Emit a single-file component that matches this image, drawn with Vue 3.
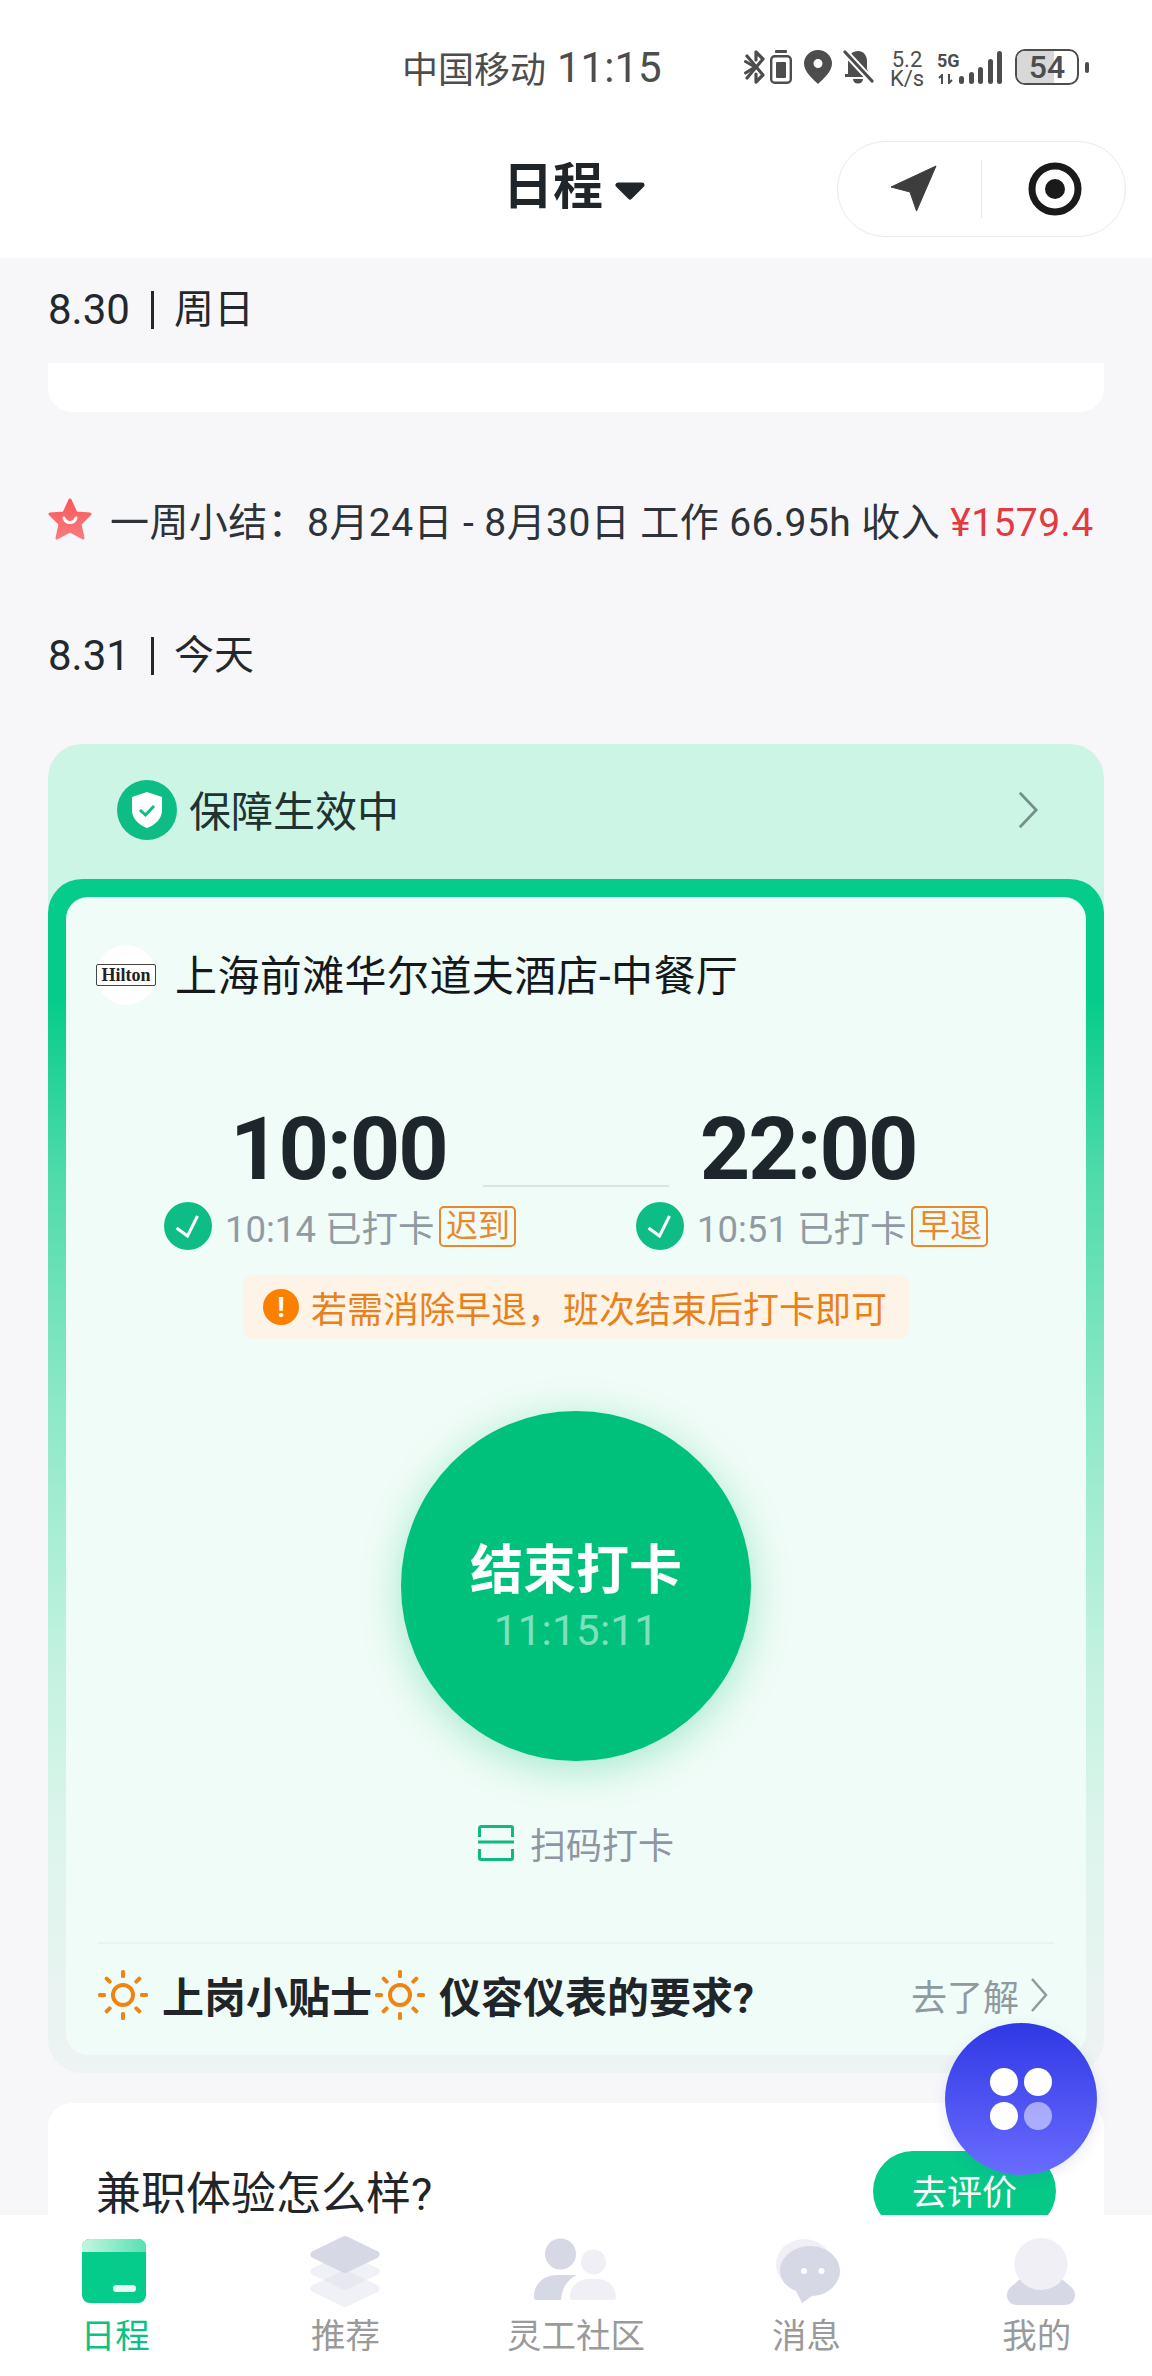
<script setup>
const tabs = [
  { key: 'schedule', label: '日程', active: true },
  { key: 'recommend', label: '推荐' },
  { key: 'community', label: '灵工社区' },
  { key: 'message', label: '消息' },
  { key: 'mine', label: '我的' },
]
const punches = [
  { plan: '10:00', time: '10:14', tag: '迟到' },
  { plan: '22:00', time: '10:51', tag: '早退' },
]
const rays = [0, 45, 90, 135, 180, 225, 270, 315]
</script>

<template>
  <div class="phone">
    <header class="top">
      <div class="status">
        <span class="carrier">中国移动</span>
        <span class="clock">11:15</span>
        <div class="status-icons">
          <svg viewBox="0 0 22 34" width="22" height="34">
            <path d="M1.500 11.500 L11 17 L1.500 23" fill="none" stroke="#4d4d4d" stroke-width="3" stroke-linecap="round"/>
            <path d="M3 6 L19 25 L12 32 V24" fill="none" stroke="#4d4d4d" stroke-width="3.200" stroke-linejoin="round" stroke-linecap="round"/>
            <path d="M3 28 L19 9 L12 2 V10" fill="none" stroke="#4d4d4d" stroke-width="3.200" stroke-linejoin="round" stroke-linecap="round"/>
          </svg>
          <svg class="g4" viewBox="0 0 22 34" width="22" height="34">
            <rect x="5" y="0" width="12" height="3" rx="1" fill="#4d4d4d"/>
            <rect x="1.200" y="6.200" width="19.600" height="26.600" rx="3.500" fill="none" stroke="#4d4d4d" stroke-width="2.400"/>
            <rect x="6" y="12" width="10" height="16" rx="1" fill="#4d4d4d"/>
          </svg>
          <svg class="g12" viewBox="0 0 28 34" width="28" height="34">
            <path fill-rule="evenodd" fill="#4d4d4d" d="M14 0a14 13.500 0 0 1 14 13.500C28 22 19 29 14 34 9 29 0 22 0 13.500A14 13.500 0 0 1 14 0Zm0 9a4.500 4.500 0 1 0 0 9 4.500 4.500 0 0 0 0-9Z"/>
          </svg>
          <svg class="g10" viewBox="0 0 32 34" width="32" height="34">
            <path fill="#4d4d4d" d="M16 1c5 0 9 4 9 10v8l2 5v3H3v-3h3V11c0-6 5-10 10-10Z"/>
            <path d="M11 29h10a5 4.500 0 0 1-10 0Z" fill="#4d4d4d"/>
            <path d="M3 2 L30 31" stroke="#fff" stroke-width="7"/>
            <path d="M3 2 L30 31" stroke="#4d4d4d" stroke-width="3.200" stroke-linecap="round"/>
          </svg>
          <div class="speed"><span>5.2</span><span>K/s</span></div>
          <div class="net">
            <div class="net-label">
              <span>5G</span>
              <svg viewBox="0 0 18 10" width="18" height="10"><path d="M5 10V1L2 4M12 0v9l3-3" fill="none" stroke="#4d4d4d" stroke-width="2"/></svg>
            </div>
            <div class="bars"><i class="b1"></i><i class="b2"></i><i class="b3"></i><i class="b4"></i><i class="b5"></i></div>
          </div>
          <div class="battery"><div class="batt-body"><div class="batt-fill"></div><span>54</span></div><i class="batt-cap"></i></div>
        </div>
      </div>
      <div class="navbar">
        <div class="title">日程<svg class="caret" viewBox="0 0 30 18" width="30" height="18"><path d="M3 3H27L15 15Z" fill="#1f2529" stroke="#1f2529" stroke-width="5" stroke-linejoin="round"/></svg></div>
        <div class="capsule">
          <div class="cap-cell">
            <svg class="cap-nav" viewBox="0 0 48 48" width="48" height="48"><path fill="#3d3d3d" stroke="#3d3d3d" stroke-linejoin="round" d="M47 1 L27.500 46 L21 27 L2 22 Z"/></svg>
          </div>
          <i class="cap-sep"></i>
          <div class="cap-cell">
            <svg class="cap-target" viewBox="0 0 54 54" width="54" height="54"><circle cx="27" cy="27" r="23" fill="none" stroke="#1a1a1a" stroke-width="7"/><circle cx="27" cy="27" r="10" fill="#1a1a1a"/></svg>
          </div>
        </div>
      </div>
    </header>

    <main class="scroll">
      <div class="date first-date"><b>8.30</b><i class="bar"></i>周日</div>
      <div class="stub"></div>
      <div class="summary">
        <svg viewBox="0 0 44 42" width="44" height="42">
          <defs><linearGradient id="star" x1="0" y1="0" x2="0" y2="1"><stop offset="0" stop-color="#f9575a"/><stop offset="1" stop-color="#fb7b7d"/></linearGradient></defs>
          <path fill="url(#star)" stroke="url(#star)" stroke-width="3" stroke-linejoin="round" d="M22 2 L28 15 L42 16 L32 26 L35 40 L22 33 L9 40 L12 26 L2 16 L16 15 Z"/>
          <path d="M16 20c2 6 10 6 12 0" fill="none" stroke="#fff" stroke-width="3" stroke-linecap="round"/>
        </svg>
        <span>一周小结：8月24日 - 8月30日 工作 66.95h 收入 <em>¥1579.4</em></span>
      </div>
      <div class="date"><b>8.31</b><i class="bar"></i>今天</div>

      <section class="shift">
        <div class="guard">
          <div class="guard-left">
            <svg viewBox="0 0 60 60" width="60" height="60">
              <circle cx="30" cy="30" r="30" fill="#0dbd85"/>
              <path fill="#fff" d="M30 12l15 5v13c0 9-7 15-15 18-8-3-15-9-15-18V17Z"/>
              <path d="M23 30l5.500 5L37 26" fill="none" stroke="#0dbd85" stroke-width="3"/>
            </svg>
            <span>保障生效中</span>
          </div>
          <svg viewBox="0 0 24 44" width="24" height="40"><path d="M3 3l18 19L3 41" fill="none" stroke="#74908a" stroke-width="3"/></svg>
        </div>

        <div class="frame">
          <div class="inner">
            <div class="hotel">
              <div class="logo"><span>Hilton</span></div>
              <div class="hotel-name">上海前滩华尔道夫酒店-中餐厅</div>
            </div>

            <div class="times">
              <div class="plan">{{ punches[0].plan }}</div>
              <i class="times-line"></i>
              <div class="plan">{{ punches[1].plan }}</div>
            </div>

            <div class="punches">
              <div v-for="p in punches" :key="p.tag" class="punch">
                <svg viewBox="0 0 48 48" width="48" height="48">
                  <circle cx="24" cy="24" r="24" fill="#0dbd85"/>
                  <path d="M12.500 26l11 8L33.500 14" fill="none" stroke="#fff" stroke-width="3"/>
                </svg>
                <span class="punch-text">{{ p.time }} 已打卡</span>
                <span class="tag">{{ p.tag }}</span>
              </div>
            </div>

            <div class="notice-row">
              <div class="notice">
                <span class="notice-ic">!</span>
                <span>若需消除早退，班次结束后打卡即可</span>
              </div>
            </div>

            <div class="btn-row">
              <div class="punch-btn">
                <div class="pb-title">结束打卡</div>
                <div class="pb-time">11:15:11</div>
              </div>
            </div>

            <div class="scan">
              <svg viewBox="0 0 36 36" width="36" height="36">
                <path d="M1.500 12V3a1.500 1.500 0 0 1 1.500-1.500h30a1.500 1.500 0 0 1 1.500 1.500v9M1.500 24v9a1.500 1.500 0 0 0 1.500 1.500h30a1.500 1.500 0 0 0 1.500-1.500V24" fill="none" stroke="#10b981" stroke-width="3"/>
                <path d="M0 17h36" stroke="#10b981" stroke-width="3"/>
              </svg>
              <span>扫码打卡</span>
            </div>

            <div class="tips">
              <div class="tips-left">
                <svg viewBox="0 0 50 50" width="50" height="50">
                  <circle cx="25" cy="25" r="10" fill="none" stroke="#ee8512" stroke-width="4"/>
                  <rect v-for="r in rays" :key="r" x="23" y="0" width="4" height="8" rx="1.500" fill="#ee8512" :transform="`rotate(${r} 25 25)`"/>
                </svg>
                <strong>上岗小贴士</strong>
                <svg viewBox="0 0 50 50" width="50" height="50">
                  <circle cx="25" cy="25" r="10" fill="none" stroke="#ee8512" stroke-width="4"/>
                  <rect v-for="r in rays" :key="r" x="23" y="0" width="4" height="8" rx="1.500" fill="#ee8512" :transform="`rotate(${r} 25 25)`"/>
                </svg>
                <strong>仪容仪表的要求?</strong>
              </div>
              <div class="tips-more">
                去了解
                <svg viewBox="0 0 20 36" width="20" height="36"><path d="M3 2l14 16L3 34" fill="none" stroke="#8f9a9f" stroke-width="2.500"/></svg>
              </div>
            </div>
          </div>
        </div>
      </section>

      <section class="rate">
        <span>兼职体验怎么样?</span>
        <div class="rate-btn">去评价</div>
      </section>
    </main>

    <nav class="tabbar">
      <div v-for="t in tabs" :key="t.key" class="tab" :class="{ on: t.active }">
        <svg class="tab-ic" viewBox="0 0 80 70" width="80" height="70">
          <template v-if="t.key === 'schedule'">
            <defs><linearGradient id="tabtop" x1="0" y1="0" x2="1" y2="0"><stop offset="0" stop-color="#c4f6e1"/><stop offset="1" stop-color="#58e0b2"/></linearGradient></defs>
            <path fill="#05cc8a" d="M7 10a8 8 0 0 1 8-8h48a8 8 0 0 1 8 8v48a8 8 0 0 1-8 8H15a8 8 0 0 1-8-8Z"/>
            <path fill="url(#tabtop)" d="M7 10a8 8 0 0 1 8-8h48a8 8 0 0 1 8 8v5H7Z"/>
            <rect x="38" y="48" width="23" height="7" rx="3.500" fill="#e4fbf2"/>
          </template>
          <template v-else-if="t.key === 'recommend'">
            <g opacity=".35">
              <path fill="#d7d8e6" stroke="#d7d8e6" stroke-width="7" stroke-linejoin="round" d="M39 36.500L70 51.500 39 66.500 8 51.500Z"/>
            </g>
            <g opacity=".35">
              <path fill="#d7d8e6" stroke="#d7d8e6" stroke-width="7" stroke-linejoin="round" d="M39 19.500L70 34.500 39 49.500 8 34.500Z"/>
            </g>
            <path fill="#d7d8e6" stroke="#d7d8e6" stroke-width="7" stroke-linejoin="round" d="M39 2.500L70 17.500 39 32.500 8 17.500Z"/>
          </template>
          <template v-else-if="t.key === 'community'">
            <circle cx="24.500" cy="17" r="15.500" fill="#d7d8e6"/>
            <circle cx="57.500" cy="25" r="12.500" fill="#efeff5"/>
            <path fill="#d7d8e6" d="M-2 60C-2 46 8 38 22 38H41C32 42 26 50 25 63H1a3 3 0 0 1-3-3Z"/>
            <path fill="#efeff5" stroke="#fff" stroke-width="3" paint-order="stroke" d="M34 60C34 50 42 42 52 42H62C72 42 80 50 80 60a3 3 0 0 1-3 3H37a3 3 0 0 1-3-3Z"/>
          </template>
          <template v-else-if="t.key === 'message'">
            <ellipse cx="38" cy="27" rx="28" ry="25" fill="#efeff5"/>
            <path fill="#d7d8e6" d="M44 9c16 0 30 11 30 25 0 13-13 25-28 25l-10 7-6-12C20 50 14 42 14 34 14 20 28 9 44 9Z"/>
            <circle cx="38" cy="34" r="3" fill="#fff"/><circle cx="55.500" cy="34" r="3" fill="#fff"/>
          </template>
          <template v-else>
            <path fill="#d7d8e6" d="M10 58c0-4 2-7 5-9L28 38H60L73 49c3 2 5 5 5 9 0 6-4 10-10 10H20c-6 0-10-4-10-10Z"/>
            <ellipse cx="44" cy="27" rx="26.500" ry="26" fill="#efeff5"/>
          </template>
        </svg>
        <span class="tab-label">{{ t.label }}</span>
      </div>
    </nav>

    <div class="fab">
      <i></i><i></i><i></i><i class="dim"></i>
    </div>
  </div>
</template>

<style>
html, body { margin: 0; padding: 0; }
</style>

<style scoped>
.phone {
  position: relative;
  width: 1152px;
  height: 2376px;
  display: flex;
  flex-direction: column;
  overflow: hidden;
  background: #f7f7fa;
  font-family: Roboto, "Noto Sans CJK SC", sans-serif;
  color: #1f2529;
}
.top { height: 258px; background: #fff; flex: none; }
.status {
  height: 134px;
  display: flex;
  align-items: center;
  padding-left: 402px;
  color: #4d4d4d;
  box-sizing: border-box;
}
.carrier { font-size: 36px; width: 155px; white-space: nowrap; }
.clock { font-size: 42px; width: 120px; white-space: nowrap; }
.status-icons { display: flex; align-items: center; margin-left: 67px; }
.g4 { margin-left: 4px; }
.g12 { margin-left: 12px; }
.g10 { margin-left: 10px; }
.speed {
  margin-left: 14px; display: flex; flex-direction: column; align-items: center;
  font-size: 22px; line-height: 19px; width: 38px; margin-top: 4px;
}
.net { margin-left: 11px; display: flex; align-items: flex-end; height: 34px; }
.net-label { display: flex; flex-direction: column; font-size: 18px; line-height: 20px; font-weight: 700; width: 22px; }
.net-label svg { display: block; margin-top: 3px; }
.bars { display: flex; align-items: flex-end; gap: 4.500px; }
.bars i { display: block; width: 5px; background: #4d4d4d; border-radius: 2.500px; }
.b1 { height: 8px; } .b2 { height: 12px; } .b3 { height: 17px; } .b4 { height: 25px; } .b5 { height: 33px; }
.battery { margin-left: 13px; display: flex; align-items: center; }
.batt-body {
  position: relative; width: 64px; height: 36px; border: 2.500px solid #4d4d4d; border-radius: 10px;
  display: flex; align-items: center; justify-content: center; overflow: hidden; box-sizing: border-box;
}
.batt-fill { position: absolute; left: 0; top: 0; bottom: 0; width: 37px; background: #d8d8d8; }
.batt-body span { position: relative; font-size: 32px; font-weight: 500; color: #4d4d4d; }
.batt-cap { display: block; width: 4px; height: 11px; background: #4d4d4d; border-radius: 2px; margin-left: 6px; }

.navbar { position: relative; height: 124px; display: flex; align-items: flex-start; justify-content: center; }
.title {
  position: relative; top: 20px; left: -2px;
  display: flex; align-items: center; font-size: 50px; font-weight: 700; color: #1f2529;
  line-height: 66px;
}
.caret { display: block; margin-left: 12px; margin-top: 8px; }
.capsule {
  position: absolute; left: 837px; top: 7px; width: 289px; height: 96px; box-sizing: border-box;
  border: 1.500px solid #eaeaea; border-radius: 48px; display: flex; align-items: center; background: #fff;
}
.cap-cell { flex: 1; display: flex; align-items: center; justify-content: center; }
.cap-nav { margin-left: 6px; }
.cap-target { margin-left: 3px; }
.cap-sep { display: block; width: 1px; height: 58px; background: #eaeaea; }

.scroll { flex: 1; min-height: 0; overflow: hidden; padding: 0 48px; position: relative; }
.date { display: flex; align-items: center; font-size: 40px; line-height: 56px; color: #23282d; }
.date b { font-weight: 400; font-size: 42px; }
.first-date { margin-top: 24px; }
.bar { display: block; width: 3px; height: 38px; background: #23282d; margin: 0 20px 0 21px; }
.stub { height: 49px; background: #fff; border-radius: 0 0 24px 24px; margin-top: 25px; }
.summary { display: flex; align-items: center; margin-top: 85px; height: 44px; font-size: 39px; letter-spacing: .42px; color: #2d3338; white-space: nowrap; }
.summary svg { flex: none; margin-right: 18px; }
.summary em { font-style: normal; color: #e43a3f; }
.summary + .date { margin-top: 87px; }

.shift { margin-top: 60px; border-radius: 34px; background: linear-gradient(180deg, #ccf5e6 0, #ccf5e6 190px, #f0f4f4 191px); }
.guard { height: 135px; display: flex; align-items: center; justify-content: space-between; padding: 0 64px 4px 69px; box-sizing: border-box; }
.guard-left { display: flex; align-items: center; gap: 12px; font-size: 42px; color: #1f3331; }
.guard-left span { margin-bottom: 2px; }
.frame {
  padding: 18px;
  border-radius: 34px;
  background: linear-gradient(180deg, #05cc8a 0%, #05cc8a 10%, #50dbab 25%, #8de8c8 44%, #bff2de 64%, #dcf5ec 80%, #eef3f3 100%);
}
.inner { background: #f0fcf7; border-radius: 22px; padding: 0 32px; height: 1158px; box-sizing: border-box; display: flex; flex-direction: column; }
.hotel { display: flex; align-items: center; gap: 19px; margin-top: 48px; height: 60px; margin-left: -2px; }
.logo {
  width: 60px; height: 60px; border-radius: 50%; background: #fff; display: flex; align-items: center; justify-content: center; flex: none;
}
.logo span {
  font-family: "Liberation Serif", serif; font-weight: 700; font-size: 18px; line-height: 20px; color: #222;
  display: block; width: 60px; box-sizing: border-box; text-align: center;
  border: 1px solid #444; border-radius: 2px;
}
.hotel-name { font-size: 42px; letter-spacing: .4px; color: #15191c; white-space: nowrap; margin-bottom: 6px; }
.times { display: flex; align-items: flex-end; margin-top: 94px; height: 92px; }
.plan { font-size: 88px; font-weight: 700; line-height: 92px; letter-spacing: -2px; color: #1d262b; white-space: nowrap; margin-bottom: -4px; }
.plan:first-child { margin-left: 132px; }
.times-line { display: block; width: 186px; height: 2px; background: #dbe4e0; margin: 0 31px 4px 36px; }
.punches { display: flex; margin-top: 10px; margin-left: 66px; }
.punch { display: flex; align-items: center; width: 472px; flex: none; height: 50px; white-space: nowrap; }
.punch svg { flex: none; }
.punch-text { margin-left: 13px; font-size: 36.500px; color: #8f9aa3; }
.tag {
  margin-left: 5px; border: 2.500px solid #e9882c; border-radius: 5px; font-size: 32px; line-height: 36px; color: #e9882c;
  box-sizing: border-box; height: 41px; width: 77px; text-align: center; white-space: nowrap;
}
.notice-row { display: flex; justify-content: center; margin-top: 24px; }
.notice {
  width: 666px; height: 64px; background: #fdf3e7; border-radius: 10px; display: flex; align-items: center;
  padding-left: 20px; box-sizing: border-box; font-size: 36px; color: #e8811a; gap: 12px; white-space: nowrap;
}
.notice-ic {
  width: 36px; height: 36px; border-radius: 50%; background: #fb8000; color: #fff; font-size: 28px; font-weight: 700;
  display: flex; align-items: center; justify-content: center; flex: none;
}
.btn-row { display: flex; justify-content: center; margin-top: 72px; }
.punch-btn {
  width: 350px; height: 350px; border-radius: 50%; background: #00c17c;
  box-shadow: 0 8px 40px rgba(0, 193, 124, .32);
  display: flex; flex-direction: column; align-items: center; color: #fff;
}
.pb-title { font-size: 53px; font-weight: 700; margin-top: 129px; line-height: 62px; }
.pb-time { font-size: 42px; line-height: 50px; margin-top: 4px; color: rgba(255,255,255,.5); letter-spacing: .3px; }
.scan { display: flex; align-items: center; justify-content: center; gap: 16px; margin-top: 62px; height: 40px; font-size: 36px; color: #8f95a3; }
.tips { margin-top: 79px; border-top: 2px solid #e8f4ef; display: flex; align-items: center; justify-content: space-between; height: 111px; box-sizing: border-box; padding: 0 5px 8px 0; }
.tips-left { display: flex; align-items: center; white-space: nowrap; }
.tips-left strong { font-size: 42px; font-weight: 700; color: #1f2529; margin: 0 3px 0 14px; }
.tips-more { display: flex; align-items: center; gap: 10px; font-size: 36px; color: #8f9a9f; white-space: nowrap; }

.rate {
  position: relative; margin-top: 30px; height: 260px; background: #fff; border-radius: 24px; padding: 48px 48px 0; display: flex;
  align-items: flex-start; justify-content: space-between; font-size: 45px; color: #1f2529;
}
.rate > span { line-height: 88px; }
.rate-btn {
  width: 183px; height: 80px; border-radius: 40px; background: #05c987; color: #fff; font-size: 35px; display: flex; align-items: center; justify-content: center;
  padding-bottom: 3px; box-sizing: border-box;
}

.tabbar { flex: none; height: 161px; background: #fff; display: flex; position: relative; }
.tab { flex: 1; display: flex; flex-direction: column; align-items: center; padding-top: 22px; box-sizing: border-box; }
.tab-ic { display: block; overflow: visible; }
.tab-label { font-size: 34.500px; line-height: 44px; margin-top: 7px; color: #9a9a9a; white-space: nowrap; }
.tab.on .tab-label { color: #0bc185; }

.fab {
  position: absolute; left: 945px; top: 2023px; width: 152px; height: 152px; border-radius: 50%;
  background: linear-gradient(180deg, #2f38e4, #6a6cff);
  box-shadow: 0 4px 14px rgba(60, 70, 200, .12);
  display: grid; grid-template-columns: 28px 28px; grid-auto-rows: 28px; gap: 6px; align-content: center; justify-content: center;
}
.fab i { display: block; background: #fff; border-radius: 50%; }
.fab i.dim { background: rgba(255,255,255,.5); }
</style>
